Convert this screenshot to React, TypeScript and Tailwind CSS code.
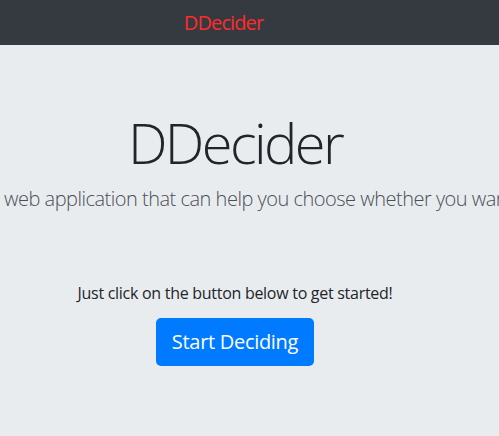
export default function App() {
  return (
    <div className="min-h-screen overflow-hidden bg-[#e9ecef] font-['Open_Sans','Noto_Sans',sans-serif] text-[#212529]">
      <nav className="h-[45px] w-full bg-[#343a40]">
        <div className="flex h-full w-[447px] items-center justify-center">
          <span className="text-[20px] leading-[30px] tracking-[-0.9px] text-[#ff2b2b]">DDecider</span>
        </div>
      </nav>
      <main className="flex w-[470px] flex-col items-center pt-[64px]">
        <h1 className="text-[56px] font-light leading-[1.2] tracking-[-2.6px]">DDecider</h1>
        <p className="-mr-[600px] mt-[8px] self-start whitespace-nowrap pl-[4px] text-[20px] font-light leading-[30px] tracking-[-0.5px] text-[#495057]">
          web application that can help you choose whether you want to do something or not.
        </p>
        <p className="mt-[67px] text-[16px] leading-[24px] tracking-[-0.28px]">Just click on the button below to get started!</p>
        <button className="mt-[13px] rounded-[5px] bg-[#007bff] px-[16px] py-[9px] text-[20px] leading-[30px] tracking-[-0.3px] text-white">
          Start Deciding
        </button>
      </main>
    </div>
  )
}
